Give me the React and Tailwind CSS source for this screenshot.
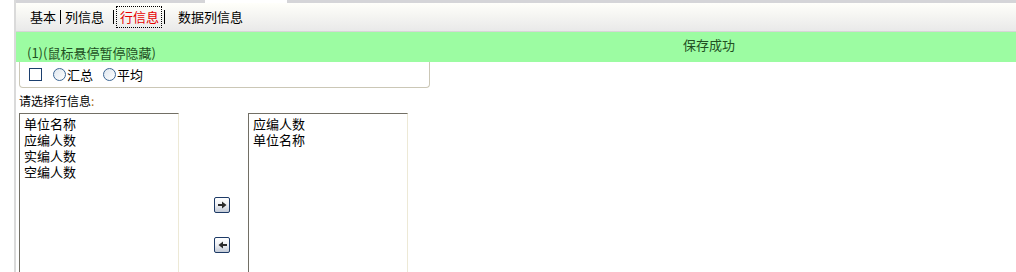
import React from 'react'

const cjk = { fontFamily: '"Noto Sans CJK SC", "Noto Sans", sans-serif' }

function ArrowButton({ dir }) {
  return (
    <button className="flex h-[16px] w-[16px] items-center justify-center rounded-[2px] border border-[#1d3a66] bg-gradient-to-b from-white via-[#eef0f4] to-[#c3cad6] p-0">
      <svg width="9" height="8" viewBox="0 0 9 8">
        {dir === 'right' ? (
          <path d="M0 3h4V0.5L8.5 4 4 7.5V5H0z" fill="#2b2b2b" />
        ) : (
          <path d="M9 3H5V0.5L0.5 4 5 7.5V5h4z" fill="#2b2b2b" />
        )}
      </svg>
    </button>
  )
}

function ListBox({ items }) {
  return (
    <div className="h-[170px] w-[160px] shrink-0 border border-t-[#726f65] border-l-[#726f65] border-r-[#ede9d6] border-b-[#ede9d6] bg-white pt-[2px] pl-[4px]">
      {items.map((it) => (
        <div key={it} className="h-[16px] text-[13px] leading-[16px] text-black">
          {it}
        </div>
      ))}
    </div>
  )
}

export default function App() {
  return (
    <div className="flex h-[272px] w-[1016px] overflow-hidden bg-white" style={cjk}>
      <div className="w-[14px] shrink-0 bg-white" />
      <div className="w-[2px] shrink-0 bg-[#dadada]" />
      <div className="flex min-w-0 flex-1 flex-col">
        {/* top strip */}
        <div className="flex h-[3px] shrink-0 bg-[#d5d5d8]">
          <div className="w-[189px]" />
          <div className="w-[82px] bg-white" />
        </div>

        {/* tabs */}
        <div className="flex h-[29px] shrink-0 items-center border-b border-[#d6d6d6] bg-gradient-to-b from-[#fffffa] to-[#e9e9e9] pl-[14px] text-[13px] text-black">
          <span>基本</span>
          <span className="ml-[4px] h-[14px] border-l border-black" />
          <span className="ml-[4px]">列信息</span>
          <span className="ml-[9px] h-[14px] border-l border-black" />
          <span className="ml-[2px] flex h-[22px] items-center border border-dotted border-black pr-[2px] pl-[3px] text-[#e60000]">
            行信息
          </span>
          <span className="ml-[2px] h-[14px] border-l border-black" />
          <span className="ml-[13px]">数据列信息</span>
        </div>

        {/* message banner */}
        <div className="flex h-[30px] shrink-0 flex-col bg-[#9cfca2] pt-[5px] text-[13px] text-[#224f22]">
          <div className="h-[8px] shrink-0 pl-[667px] leading-[15px]">保存成功</div>
          <div className="shrink-0 pl-[11px] leading-[15px]">(1)(鼠标悬停暂停隐藏)</div>
        </div>

        {/* options box */}
        <div className="ml-[3px] flex h-[26px] w-[411px] shrink-0 items-center rounded-b-[4px] border border-t-0 border-[#cbc7b6] pl-[9px] text-[13px] text-black">
          <span className="h-[13px] w-[13px] border border-[#1c3f6e] bg-white" />
          <span className="ml-[11px] h-[13px] w-[13px] rounded-full border-[1.5px] border-[#3b6593] bg-gradient-to-br from-[#dfe6ee] to-white" />
          <span className="ml-[1px]">汇总</span>
          <span className="ml-[10px] h-[13px] w-[13px] rounded-full border-[1.5px] border-[#3b6593] bg-gradient-to-br from-[#dfe6ee] to-white" />
          <span className="ml-[1px]">平均</span>
        </div>

        <div className="mt-[4px] ml-[3px] h-[17px] shrink-0 text-[12px] leading-[17px] text-black">
          请选择行信息<span className="text-[#b0701c]">:</span>
        </div>

        <div className="mt-[4px] ml-[3px] flex shrink-0">
          <ListBox items={['单位名称', '应编人数', '实编人数', '空编人数']} />
          <div className="flex w-[69px] shrink-0 flex-col items-start pt-[84px] pl-[35px]">
            <ArrowButton dir="right" />
            <div className="h-[24px]" />
            <ArrowButton dir="left" />
          </div>
          <ListBox items={['应编人数', '单位名称']} />
        </div>
      </div>
    </div>
  )
}
